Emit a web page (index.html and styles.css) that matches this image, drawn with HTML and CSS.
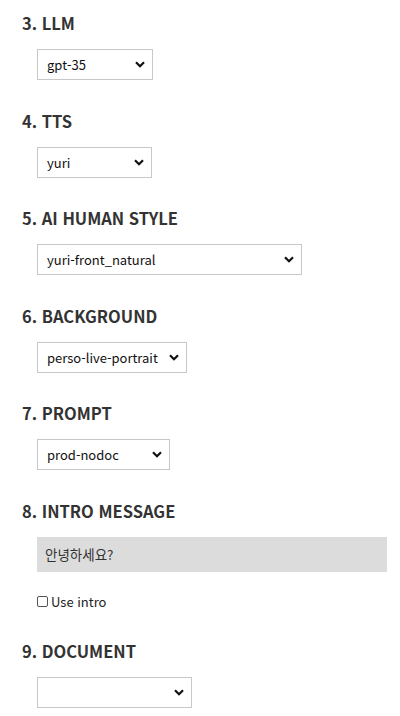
FILE: index.html
```html
<!DOCTYPE html>
<html lang="ko">
<head>
<meta charset="utf-8">
<link rel="stylesheet" href="styles.css">
</head>
<body>
<div class="form">
  <section class="field">
    <h3 class="title">3. LLM</h3>
    <div class="select w-llm"><span>gpt-35</span><svg class="chev" width="10" height="7" viewBox="0 0 10 7"><path d="M1 1.2 L5 5.2 L9 1.2" fill="none" stroke="#111" stroke-width="2.2"/></svg></div>
  </section>
  <section class="field">
    <h3 class="title">4. TTS</h3>
    <div class="select w-tts"><span>yuri</span><svg class="chev" width="10" height="7" viewBox="0 0 10 7"><path d="M1 1.2 L5 5.2 L9 1.2" fill="none" stroke="#111" stroke-width="2.2"/></svg></div>
  </section>
  <section class="field">
    <h3 class="title">5. AI HUMAN STYLE</h3>
    <div class="select w-style"><span>yuri-front_natural</span><svg class="chev" width="10" height="7" viewBox="0 0 10 7"><path d="M1 1.2 L5 5.2 L9 1.2" fill="none" stroke="#111" stroke-width="2.2"/></svg></div>
  </section>
  <section class="field">
    <h3 class="title">6. BACKGROUND</h3>
    <div class="select w-bg"><span>perso-live-portrait</span><svg class="chev" width="10" height="7" viewBox="0 0 10 7"><path d="M1 1.2 L5 5.2 L9 1.2" fill="none" stroke="#111" stroke-width="2.2"/></svg></div>
  </section>
  <section class="field">
    <h3 class="title">7. PROMPT</h3>
    <div class="select w-prompt"><span>prod-nodoc</span><svg class="chev" width="10" height="7" viewBox="0 0 10 7"><path d="M1 1.2 L5 5.2 L9 1.2" fill="none" stroke="#111" stroke-width="2.2"/></svg></div>
  </section>
  <section class="field intro">
    <h3 class="title">8. INTRO MESSAGE</h3>
    <div class="textbox">안녕하세요?</div>
    <label class="check"><span class="box"></span>Use intro</label>
  </section>
  <section class="field">
    <h3 class="title">9. DOCUMENT</h3>
    <div class="select w-doc"><span></span><svg class="chev" width="10" height="7" viewBox="0 0 10 7"><path d="M1 1.2 L5 5.2 L9 1.2" fill="none" stroke="#111" stroke-width="2.2"/></svg></div>
  </section>
</div>
</body>
</html>
```

FILE: styles.css
```css
html, body {
  margin: 0;
  padding: 0;
  background: #ffffff;
}

body {
  font-family: "Noto Sans CJK KR", "Noto Sans", sans-serif;
  color: #333333;
}

.form {
  display: flex;
  flex-direction: column;
  padding: 11px 0 0 22px;
}

.field {
  display: flex;
  flex-direction: column;
  align-items: flex-start;
  gap: 14px;
  padding-bottom: 28.5px;
}

.title {
  margin: 0;
  height: 24px;
  line-height: 24px;
  font-size: 16.5px;
  font-weight: 700;
  color: #333333;
}

.select {
  box-sizing: border-box;
  margin-left: 15px;
  height: 31px;
  border: 1px solid #c8c8c8;
  background: #ffffff;
  display: flex;
  align-items: center;
  justify-content: space-between;
  padding: 0 7px 0 9px;
  font-size: 13px;
  color: #111111;
  white-space: nowrap;
}

.chev {
  flex: none;
}

.w-llm { width: 116px; }
.w-tts { width: 115px; }
.w-style { width: 265px; }
.w-bg { width: 150px; }
.w-prompt { width: 133px; }
.w-doc { width: 155px; }

.intro {
  gap: 0;
  padding-bottom: 25px;
}

.textbox {
  box-sizing: border-box;
  margin: 14px 0 0 15px;
  width: 350px;
  height: 35px;
  background: #dcdcdc;
  display: flex;
  align-items: center;
  padding-left: 8px;
  font-size: 13.5px;
  color: #333333;
}

.check {
  margin: 18px 0 0 15px;
  height: 24px;
  display: flex;
  align-items: center;
  font-size: 13px;
  color: #222222;
}

.box {
  box-sizing: border-box;
  width: 11px;
  height: 11px;
  border: 1px solid #555555;
  border-radius: 2px;
  margin-right: 3px;
  background: #ffffff;
}
```
